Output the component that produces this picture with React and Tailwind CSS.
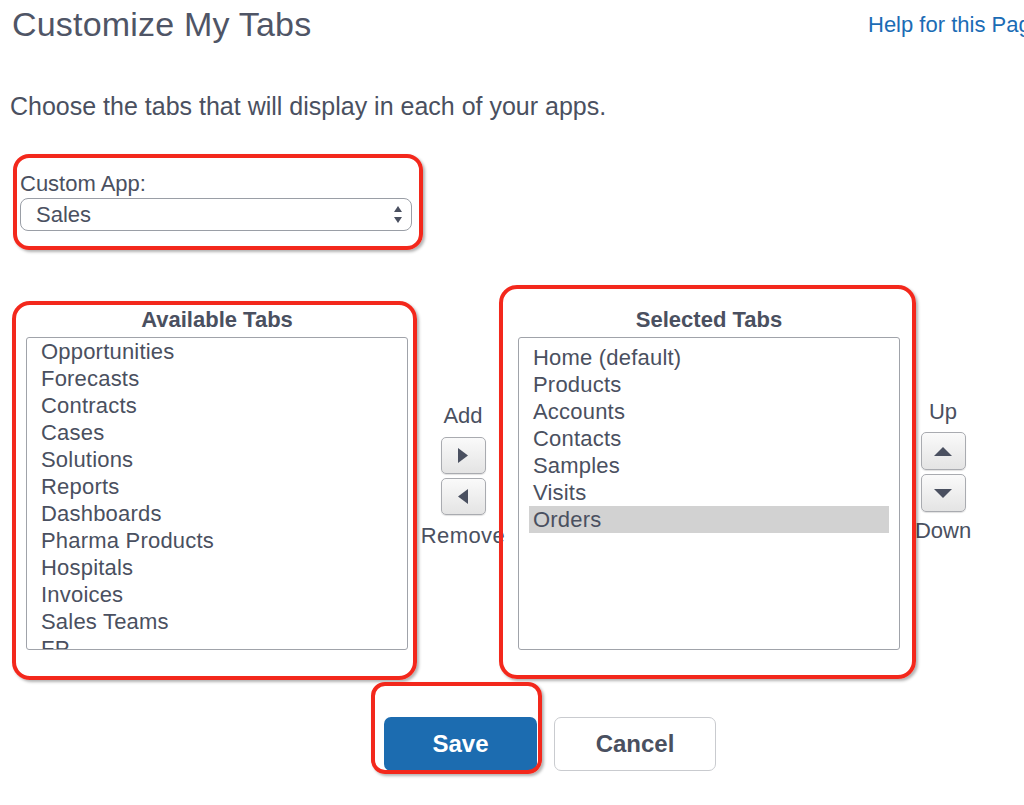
import React from 'react';

const AVAILABLE = [
  'Opportunities',
  'Forecasts',
  'Contracts',
  'Cases',
  'Solutions',
  'Reports',
  'Dashboards',
  'Pharma Products',
  'Hospitals',
  'Invoices',
  'Sales Teams',
  'FP',
];

const SELECTED = ['Home (default)', 'Products', 'Accounts', 'Contacts', 'Samples', 'Visits', 'Orders'];

function Tri({ dir }) {
  // small dark triangles used on the move buttons
  const pts = {
    right: '0,0 10,7.5 0,15',
    left: '10,0 0,7.5 10,15',
    up: '0,9 9,0 18,9',
    down: '0,0 18,0 9,9',
  }[dir];
  const size = dir === 'up' || dir === 'down' ? { w: 18, h: 9 } : { w: 10, h: 15 };
  return (
    <svg width={size.w} height={size.h} viewBox={`0 0 ${size.w} ${size.h}`}>
      <polygon points={pts} fill="#4a5060" />
    </svg>
  );
}

function MoveButton({ dir, tall }) {
  return (
    <button
      className={`w-[45px] ${tall ? 'h-[38px]' : 'h-[37px]'} flex items-center justify-center rounded-[5px] border border-[#a9abb0] bg-gradient-to-b from-[#fafafa] to-[#e4e4e4] shadow-[0_1px_1px_rgba(0,0,0,0.12)]`}
    >
      <Tri dir={dir} />
    </button>
  );
}

function ListBox({ items, selected, padTop }) {
  return (
    <div
      className={`mt-[5px] h-[313px] overflow-hidden rounded-[3px] border-[1.5px] border-[#a0a3aa] bg-white px-[10px] ${padTop}`}
    >
      {items.map(item => (
        <div
          key={item}
          className={`h-[27px] pl-[4px] text-[22px] leading-[27px] tracking-[0.2px] whitespace-nowrap ${
            item === selected ? 'bg-[#d2d2d2]' : ''
          }`}
        >
          {item}
        </div>
      ))}
    </div>
  );
}

export default function App() {
  return (
    <div className="relative w-[1024px] h-[805px] overflow-hidden bg-white text-[#4a5060] font-['Liberation_Sans',Arial,sans-serif]">
      {/* header */}
      <div className="flex">
        <h1 className="w-[868px] shrink-0 pl-[12px] pt-[4px] text-[34px] leading-[40px] font-normal tracking-[0.2px] text-[#4f5566]">
          Customize My Tabs
        </h1>
        <a className="pt-[12px] text-[22px] leading-[26px] text-[#1b6cb5] whitespace-nowrap">Help for this Page</a>
      </div>

      <p className="mt-[47px] pl-[10px] text-[25px] leading-[30px]">
        Choose the tabs that will display in each of your apps.
      </p>

      {/* app picker */}
      <div className="mt-[50px] pl-[20px] text-[22px] leading-[26px]">Custom App:</div>
      <div className="ml-[20px] mt-[1px] w-[392px] h-[33px] flex items-center justify-between rounded-[8px] border-[1.5px] border-[#9a9ea6] pl-[15px] pr-[8px]">
        <span className="text-[22px] leading-[26px]">Sales</span>
        <svg width="10" height="17" viewBox="0 0 10 17">
          <polygon points="1,6 5,0 9,6" fill="#4a5060" />
          <polygon points="1,11 9,11 5,17" fill="#4a5060" />
        </svg>
      </div>

      {/* tab chooser */}
      <div className="mt-[77px] flex pl-[26px]">
        <div className="w-[382px] shrink-0">
          <div className="h-[24px] text-center text-[22px] leading-[24px] font-bold">Available Tabs</div>
          <ListBox items={AVAILABLE} padTop="pt-0" />
        </div>

        <div className="w-[110px] shrink-0 flex flex-col items-center">
          <div className="mt-[95px] text-[22px] leading-[26px]">Add</div>
          <div className="mt-[8px] flex flex-col gap-[4px]">
            <MoveButton dir="right" />
            <MoveButton dir="left" />
          </div>
          <div className="mt-[8px] text-[22px] leading-[26px] tracking-[0.4px]">Remove</div>
        </div>

        <div className="w-[382px] shrink-0">
          <div className="h-[24px] text-center text-[22px] leading-[24px] font-bold">Selected Tabs</div>
          <ListBox items={SELECTED} selected="Orders" padTop="pt-[6px]" />
        </div>

        <div className="w-[86px] shrink-0 flex flex-col items-center">
          <div className="mt-[91px] text-[22px] leading-[26px]">Up</div>
          <div className="mt-[7px] flex flex-col gap-[4px]">
            <MoveButton dir="up" tall />
            <MoveButton dir="down" tall />
          </div>
          <div className="mt-[6px] text-[22px] leading-[26px]">Down</div>
        </div>
      </div>

      {/* actions */}
      <div className="mt-[67px] flex gap-[17px] pl-[384px]">
        <button className="w-[153px] h-[54px] rounded-[7px] bg-[#1c6cb0] text-[24px] font-bold text-white">Save</button>
        <button className="w-[162px] h-[54px] rounded-[7px] border-[1.5px] border-[#c9cbcf] bg-white text-[24px] font-bold text-[#4a5060]">
          Cancel
        </button>
      </div>

      {/* red annotation boxes drawn over the screenshot */}
      <div className="absolute left-[13px] top-[154px] w-[410px] h-[96px] rounded-[16px] border-4 border-[#f3281c] shadow-[2px_2px_3px_rgba(0,0,0,0.3)]" />
      <div className="absolute left-[12px] top-[301px] w-[405px] h-[379px] rounded-[18px] border-4 border-[#f3281c] shadow-[2px_2px_3px_rgba(0,0,0,0.3)]" />
      <div className="absolute left-[499px] top-[285px] w-[417px] h-[394px] rounded-[18px] border-4 border-[#f3281c] shadow-[2px_2px_3px_rgba(0,0,0,0.3)]" />
      <div className="absolute left-[371px] top-[682px] w-[171px] h-[92px] rounded-[14px] border-4 border-[#f3281c] shadow-[2px_2px_3px_rgba(0,0,0,0.3)]" />
    </div>
  );
}
